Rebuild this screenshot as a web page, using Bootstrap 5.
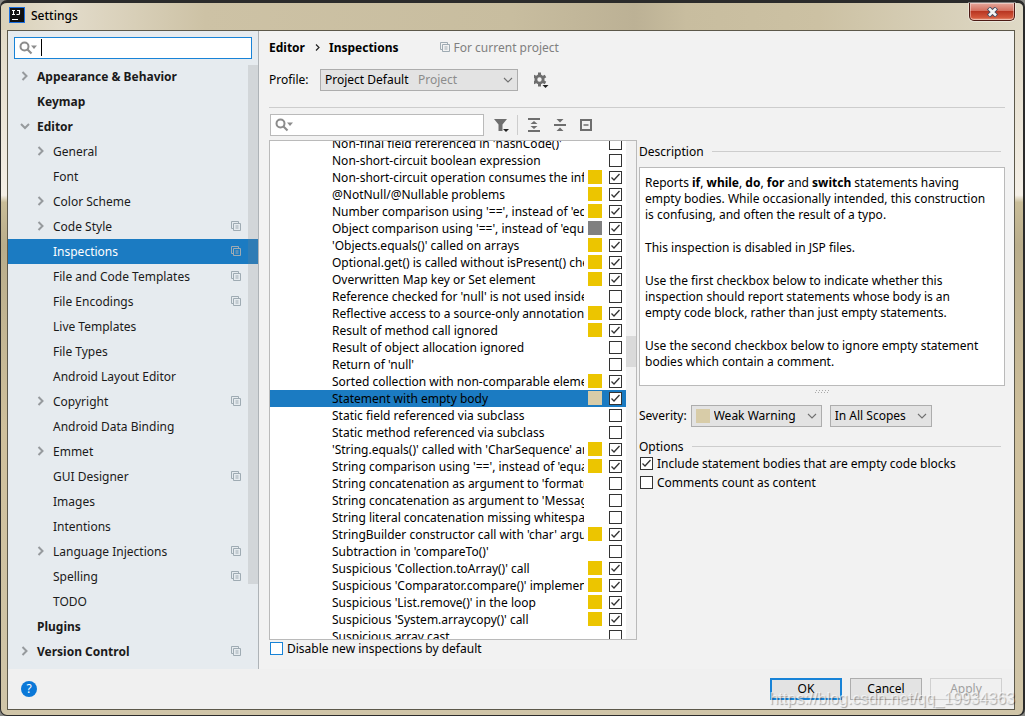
<!DOCTYPE html>
<html lang="en">
<head>
<meta charset="utf-8">
<meta name="viewport" content="width=device-width, initial-scale=1">
<title>Settings</title>
<link href="https://cdn.jsdelivr.net/npm/bootstrap@5.3.0/dist/css/bootstrap.min.css" rel="stylesheet">
<style>
:root{--ui-blue:#1b7bc2;--ui-focus:#1883d7;--ui-line:#cdcdcd;--ui-edge:#bababa}
body{font-family:"Noto Sans","Noto Sans CJK SC",sans-serif;font-size:12px;line-height:17px;color:#000;background:#8a8a86}
h1,h2,b,input,select,button{font-size:12px;line-height:17px}

/* window frame */
.win{height:100vh;min-height:700px;padding:0 8px 5px 6px;border:solid #2b2b2b;border-width:3px 2px 1px 1px;border-radius:7px;
  background:linear-gradient(90deg,#d9d1b9 0,#e3dccb 6%,#cdc2a5 20%,#c8bd9f 50%,#bcb195 62%,#c8bd9f 67%,#ccc1a3 80%,#dfd9c6 100%) 0 0/100% 27px no-repeat,linear-gradient(#ded6c2 0,#f4efe6 27%,#c9bd98 28%,#b9ad8b 34%,#cfc09c 60%,#d0c5a8 100%)}
.title-bar{height:27px;padding:4px 0 0 2px}
.title-bar h1{margin:0;padding-left:6px}
.close-btn{width:46px;height:18px;margin-top:-4px;border:1px solid #4c1a14;border-top:0;border-radius:0 0 5px 5px;background:linear-gradient(#e5a79b,#d4705f 45%,#b93622 50%,#d2573b 85%,#e89a80);box-shadow:inset 0 0 0 1px #ffffff66,0 0 0 1px #ffffff66}
.pane{border:1px solid #5c584a;background:#f2f2f2;min-height:0}
.foot{height:41px;background:#f0f0f0;padding:0 12px 0 13px}
.help-btn{width:16px;height:16px;border:0;border-radius:50%;background:#0a78d8;color:#fff;padding:0;line-height:16px}

/* fields and pickers */
.field{height:22px;background:#fff;border:1px solid var(--ui-edge);padding-left:4px}
.field.active{border-color:var(--ui-focus);margin:0 6px}
.field input{border:0;outline:0;background:none;min-width:0;padding:0;caret-color:transparent}
.list-search{width:214px;margin-left:1px}
.caret{width:1px;height:17px;background:#000;margin-left:2px}
.pick{height:22px;border:1px solid #adadad;background:#e3e3e3;padding-left:4px}
.pick select{appearance:none;border:0;outline:0;border-radius:0;padding:0 22px 0 0;height:20px;color:#000;background:transparent url("data:image/svg+xml,%3Csvg xmlns='http://www.w3.org/2000/svg' viewBox='0 0 10 6'%3E%3Cpath d='M1 1l4 4 4-4' fill='none' stroke='%23707070' stroke-width='1.1'/%3E%3C/svg%3E") right 4px center/10px 6px no-repeat}
.pick .hint{left:97px;top:1px;color:#8c8c8c;pointer-events:none}
.profile-row{margin-top:13px}
.profile{width:198px}
.severity{width:131px}
.scope{width:102px}
.tool{border:0;background:none;padding:0;line-height:0}
.bar-tools{gap:12px;margin-left:10px}
.bar-tools .sep{width:1px;height:20px;background:var(--ui-line);margin:0 -3px 0 -5px}
.rule{height:1px;background:var(--ui-line)}
.dlg{width:72px;height:22px;border:1px solid #adadad;background:#e3e3e3;padding:0}
.dlg.main{border:2px solid var(--ui-focus)}
.dlg:disabled{color:#a0a0a0;border-color:#d0d0d0;background:#f0f0f0}
.tick{appearance:none;width:13px;height:13px;margin:0 0 0 1px;border:1px solid #333;background:#fff;flex:none}
.tick:checked{background:#fff url("data:image/svg+xml,%3Csvg xmlns='http://www.w3.org/2000/svg' viewBox='0 0 11 11'%3E%3Cpath d='M1.500 5.500l2.500 2.500 5.500-6' fill='none' stroke='%23333' stroke-width='1.300'/%3E%3C/svg%3E")}
.tick.edge{border:1px solid var(--ui-focus)}

/* settings tree */
.side{width:251px;background:#e6ebef;border-right:1px solid #aeb3b7;padding-top:6px}
.tree{margin-top:5px}
.tree a{height:25px;color:#1a1a1a;padding:0 17px 0 12px;text-decoration:none}
.tree a.top-item{font-weight:700}
.tree a.sub-item{padding-left:28px}
.tree a.on{background:var(--ui-blue);color:#fff}
.tree .name{padding-left:7px}
.thumb{top:1px;right:0;width:10px;height:519px;background:#80808033}

/* inspections */
.main-col{padding:8px 9px 12px 10px;min-width:0}
.scope-note{margin-left:41px;color:#808080}
.insp{width:368px;min-height:0}
.listing{border:1px solid var(--ui-edge);background:#fff;min-height:0}
.scroller{overflow-y:scroll;scrollbar-width:none}
.scroller::-webkit-scrollbar{display:none}
.scroller label{height:17px;padding:0 4px 0 62px}
.scroller label.on{background:var(--ui-blue)}
.scroller .name{width:252px;overflow:hidden;white-space:nowrap}
.sw{width:14px;height:14px}
.scroller .sw{margin:0 6px 0 4px}
.warn{background:#ecc500}.gray{background:#808080}.weak{background:#d8cca8}
.track{width:10px;background:#f2f2f2;padding-top:195px}
.track div{height:31px;background:#dadada}
.detail{padding:27px 0 0 2px}
.desc{border:1px solid var(--ui-edge);background:#fff;height:219px;margin-top:7px;padding:6px 5px;line-height:16px}
.desc p{margin:0 0 17px}
.row-gap{margin-top:11px}
.stamp{right:8px;bottom:6px;font:16px/20px "Liberation Sans",sans-serif;color:#ffffffa0;text-shadow:1px 1px 1px #00000050;pointer-events:none}
</style>
</head>
<body>
<svg width="0" height="0" class="position-absolute" aria-hidden="true">
<defs>
<symbol id="copy" viewBox="0 0 10 10"><path d="M2 7.500H.5v-7h7V2M2.500 2.500h7v7h-7zM4.500 5h3M4.500 7h3" fill="none" stroke="#9fabb3"/></symbol>
<symbol id="right" viewBox="0 0 10 10"><path d="M2.500 1l4 4-4 4" fill="none" stroke="#969a9d" stroke-width="2"/></symbol>
<symbol id="down" viewBox="0 0 10 10"><path d="M1 3l4 4 4-4" fill="none" stroke="#969a9d" stroke-width="2"/></symbol>
<symbol id="find" viewBox="0 0 20 14"><circle cx="5.500" cy="5.500" r="4" fill="none" stroke="#8c8c8c" stroke-width="2"/><path d="M8.500 8.500l4 4" stroke="#8c8c8c" stroke-width="2.200"/><path d="M12 4.500h6l-3 3.500z" fill="#8c8c8c"/></symbol>
</defs>
</svg>
<div class="win d-flex flex-column position-relative">
  <header class="title-bar d-flex align-items-start">
    <svg width="16" height="16" viewBox="0 0 16 16" aria-hidden="true"><path fill="#1a6fe0" d="M0 0h16v16H0z"/><path fill="#111" d="M1 1h14v14H1z"/><path d="M3 3.500h3M4.500 3.500v4M3 7.500h3M8 3.500h2.500v3.200q0 .8-1 .8H7.500M3 12.500h6" fill="none" stroke="#fff" stroke-width="1.100"/></svg>
    <h1>Settings</h1>
    <button class="close-btn ms-auto p-0 d-flex align-items-center justify-content-center" aria-label="Close"><svg width="13" height="10" viewBox="0 0 13 10"><path d="M2.500 1l8 8M10.500 1l-8 8" stroke="#454c60" stroke-width="4.500"/><path d="M3 1.500l7 7M10 1.500l-7 7" stroke="#f4f4f4" stroke-width="2.500"/></svg></button>
  </header>

  <div class="pane flex-grow-1 d-flex flex-column">
    <div class="d-flex flex-grow-1" style="min-height:0">
      <nav class="side flex-shrink-0" aria-label="Settings">
        <div class="field active d-flex align-items-center"><svg width="20" height="14"><use href="#find"/></svg><span class="caret"></span><input class="flex-grow-1" aria-label="Search settings"></div>
        <div class="tree position-relative"><div id="tree"></div><div class="thumb position-absolute"></div></div>
      </nav>

      <main class="main-col flex-grow-1 d-flex flex-column">
        <div class="d-flex align-items-center">
          <b>Editor</b>
          <svg class="mx-2" width="8" height="9" viewBox="0 0 8 9"><path d="M3 1.500l3 3-3 3" fill="none" stroke="#222" stroke-width="1.200"/></svg>
          <b>Inspections</b>
          <span class="scope-note d-flex align-items-center gap-1"><svg width="10" height="10"><use href="#copy"/></svg>For current project</span>
        </div>
        <div class="profile-row d-flex align-items-center">
          <label for="profile" style="width:51px">Profile:</label>
          <div class="pick profile d-flex position-relative">
            <select id="profile" class="flex-grow-1"><option>Project Default</option><option>Default</option></select>
            <span class="hint position-absolute">Project</span>
          </div>
          <button class="tool ms-3" aria-label="Profile actions"><svg width="16" height="18" viewBox="1 0 16 18"><circle cx="6.500" cy="8.500" r="3.600" fill="none" stroke="#6e6e6e" stroke-width="2.800"/><path d="M6.500 1.500v3M6.500 12.500v3M.5 5l2.700 1.600M9.800 10.400l2.700 1.600M.5 12l2.700-1.600M9.800 6.600L12.500 5" stroke="#6e6e6e" stroke-width="3"/><path d="M9.500 14h6l-3 3z" fill="#222"/></svg></button>
        </div>
        <div class="rule mt-3"></div>
        <div class="d-flex flex-grow-1 mt-1 pt-1" style="min-height:0">
          <section class="insp flex-shrink-0 d-flex flex-column">
            <div class="d-flex align-items-center" style="margin-top:-2px">
              <div class="field list-search d-flex align-items-center"><svg width="20" height="14"><use href="#find"/></svg><input class="flex-grow-1" aria-label="Search inspections"></div>
              <div class="bar-tools d-flex align-items-center">
              <button class="tool" aria-label="Filter"><svg width="16" height="16" viewBox="0 0 16 16"><path d="M0 2h13L8.500 7.500V14h-4V7.500z" fill="#6e6e6e"/><path d="M9 12h6l-3 3z" fill="#222"/></svg></button>
              <span class="sep"></span>
              <button class="tool" aria-label="Expand all"><svg width="14" height="14" viewBox="0 0 14 14"><path d="M1 1h12M1 13h12" stroke="#6e6e6e" stroke-width="2"/><path d="M3.500 6L7 3l3.500 3zM3.500 8L7 11l3.500-3z" fill="#6e6e6e"/></svg></button>
              <button class="tool" aria-label="Collapse all"><svg width="14" height="14" viewBox="0 0 14 14"><path d="M1 7h12" stroke="#6e6e6e" stroke-width="2"/><path d="M3.500 1h7L7 4.500zM3.500 13h7L7 9.500z" fill="#6e6e6e"/></svg></button>
              <button class="tool" aria-label="Reset to empty"><svg width="14" height="14" viewBox="0 0 14 14"><path d="M2 2h10v10H2z" fill="none" stroke="#6e6e6e" stroke-width="2"/><path d="M4.500 7h5" stroke="#6e6e6e" stroke-width="1.500"/></svg></button>
              </div>
            </div>
            <div class="listing d-flex flex-grow-1 mt-1">
              <div class="scroller flex-grow-1" id="rows"></div>
              <div class="track"><div></div></div>
            </div>
            <label class="d-flex align-items-center gap-1 flex-shrink-0"><input type="checkbox" class="tick edge">Disable new inspections by default</label>
          </section>

          <section class="detail flex-grow-1 d-flex flex-column">
            <div class="d-flex align-items-center gap-2"><h2 class="m-0 fw-normal">Description</h2><div class="rule flex-grow-1 me-1"></div></div>
            <div class="desc">
              <p>Reports <b>if</b>, <b>while</b>, <b>do</b>, <b>for</b> and <b>switch</b> statements having<br>empty bodies. While occasionally intended, this construction<br>is confusing, and often the result of a typo.</p>
              <p>This inspection is disabled in JSP files.</p>
              <p>Use the first checkbox below to indicate whether this<br>inspection should report statements whose body is an<br>empty code block, rather than just empty statements.</p>
              <p>Use the second checkbox below to ignore empty statement<br>bodies which contain a comment.</p>
            </div>
            <svg class="mx-auto mt-1 flex-shrink-0" width="16" height="4" viewBox="0 0 16 4" aria-hidden="true"><path d="M2 .5h14M1 2.500h14" stroke="#aaa" stroke-dasharray="1 2"/></svg>
            <div class="row-gap d-flex align-items-center">
              <label for="sev" class="me-1">Severity:</label>
              <div class="pick severity d-flex align-items-center"><span class="sw weak me-1"></span><select id="sev" class="flex-grow-1"><option>Weak Warning</option><option>Warning</option><option>Error</option></select></div>
              <div class="pick scope d-flex ms-2"><select class="flex-grow-1" aria-label="Scope"><option>In All Scopes</option></select></div>
            </div>
            <div class="row-gap d-flex align-items-center gap-2"><h2 class="m-0 fw-normal">Options</h2><div class="rule flex-grow-1 me-1"></div></div>
            <label class="d-flex align-items-center gap-1"><input type="checkbox" class="tick" checked>Include statement bodies that are empty code blocks</label>
            <label class="d-flex align-items-center gap-1" style="margin-top:2px"><input type="checkbox" class="tick">Comments count as content</label>
          </section>
        </div>
      </main>
    </div>
    <footer class="foot d-flex align-items-center gap-2">
      <button class="help-btn me-auto" aria-label="Help">?</button>
      <button class="dlg main">OK</button>
      <button class="dlg">Cancel</button>
      <button class="dlg" disabled>Apply</button>
    </footer>
  </div>
  <span class="stamp position-absolute">https://blog.csdn.net/qq_19934363</span>
</div>
<script>
// [name, level, arrow, project-level icon]
const pages = [
  ['Appearance & Behavior',1,'right'],['Keymap',1],['Editor',1,'down'],
  ['General',2,'right'],['Font',2],['Color Scheme',2,'right'],['Code Style',2,'right',1],
  ['Inspections',2,'',1],['File and Code Templates',2,'',1],['File Encodings',2,'',1],
  ['Live Templates',2],['File Types',2],['Android Layout Editor',2],['Copyright',2,'right',1],
  ['Android Data Binding',2],['Emmet',2,'right'],['GUI Designer',2,'',1],['Images',2],
  ['Intentions',2],['Language Injections',2,'right',1],['Spelling',2,'',1],['TODO',2],
  ['Plugins',1],['Version Control',1,'right',1]
];
const icon = id => `<svg width="10" height="10" class="flex-shrink-0">${id ? `<use href="#${id}"/>` : ''}</svg>`;
document.getElementById('tree').innerHTML = pages.map(([name, level, arrow, shared]) =>
  `<a href="#" class="d-flex align-items-center ${level === 1 ? 'top-item' : 'sub-item'} ${name === 'Inspections' ? 'on' : ''}">` +
  `${icon(arrow)}<span class="name flex-grow-1">${name.replace('&', '&amp;')}</span>${shared ? icon('copy') : ''}</a>`).join('');

// [name, severity swatch, enabled]
const checks = [
  ["Non-final field referenced in 'hashCode()'"],['Non-short-circuit boolean expression'],
  ['Non-short-circuit operation consumes the infinite stream','warn',1],['@NotNull/@Nullable problems','warn',1],
  ["Number comparison using '==', instead of 'equals()'",'warn',1],["Object comparison using '==', instead of 'equals()'",'gray',1],
  ["'Objects.equals()' called on arrays",'warn',1],['Optional.get() is called without isPresent() check','warn',1],
  ['Overwritten Map key or Set element','warn',1],["Reference checked for 'null' is not used inside 'if'"],
  ['Reflective access to a source-only annotation','warn',1],['Result of method call ignored','warn',1],
  ['Result of object allocation ignored'],["Return of 'null'"],
  ['Sorted collection with non-comparable elements','warn',1],['Statement with empty body','weak',1],
  ['Static field referenced via subclass'],['Static method referenced via subclass'],
  ["'String.equals()' called with 'CharSequence' argument",'warn',1],["String comparison using '==', instead of 'equals()'",'warn',1],
  ["String concatenation as argument to 'format()' call"],["String concatenation as argument to 'MessageFormat.format()' call"],
  ['String literal concatenation missing whitespace'],["StringBuilder constructor call with 'char' argument",'warn',1],
  ["Subtraction in 'compareTo()'"],["Suspicious 'Collection.toArray()' call",'warn',1],
  ["Suspicious 'Comparator.compare()' implementation",'warn',1],["Suspicious 'List.remove()' in the loop",'warn',1],
  ["Suspicious 'System.arraycopy()' call",'warn',1],['Suspicious array cast']
];
const rows = document.getElementById('rows');
rows.innerHTML = checks.map(([name, kind = '', enabled]) =>
  `<label class="d-flex align-items-center ${kind === 'weak' ? 'on' : ''}"><span class="name">${name}</span>` +
  `<span class="sw ${kind}"></span><input type="checkbox" class="tick" ${enabled ? 'checked' : ''}></label>`).join('');
rows.scrollTop = 6;
</script>
<script src="https://cdn.jsdelivr.net/npm/bootstrap@5.3.0/dist/js/bootstrap.bundle.min.js"></script>
</body>
</html>
